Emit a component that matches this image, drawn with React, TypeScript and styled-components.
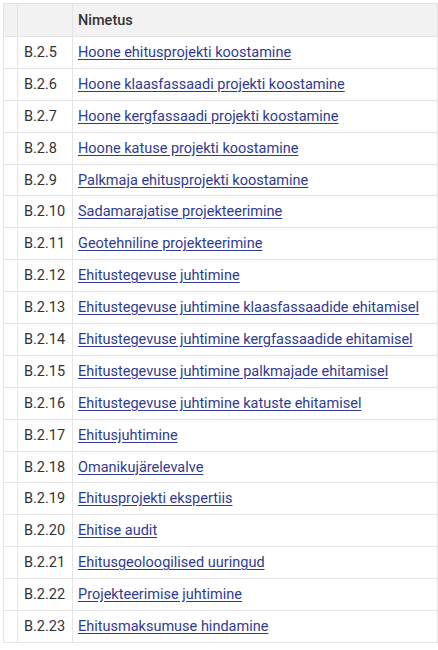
import React from 'react';
import styled, { createGlobalStyle } from 'styled-components';

const GlobalStyle = createGlobalStyle`
  body {
    margin: 0;
    background: #ffffff;
    font-family: Roboto, "Noto Sans", Arial, sans-serif;
  }
`;

const Wrapper = styled.div`
  padding: 3px 0 0 3px;
`;

const Table = styled.table`
  width: 435px;
  border-collapse: collapse;
  font-size: 14.5px;
  color: #333333;
  table-layout: fixed;
`;

const HeadCell = styled.th<{ $w?: number }>`
  background: #f2f2f2;
  border: 1px solid #e4e4e4;
  height: 33px;
  padding: 0 5px;
  text-align: left;
  font-weight: 500;
  color: #333333;
  width: ${(p) => (p.$w ? `${p.$w}px` : 'auto')};
  box-sizing: border-box;
`;

const Cell = styled.td`
  border: 1px solid #e4e4e4;
  height: 30.9px;
  padding: 0 5px;
  white-space: nowrap;
  line-height: 17px;
`;

const CodeCell = styled(Cell)`
  padding-left: 6px;
`;

const Link = styled.a`
  color: #2f3b93;
  text-decoration: underline;
  text-underline-offset: 1.5px;
`;

const rows: [string, string][] = [
  ['B.2.5', 'Hoone ehitusprojekti koostamine'],
  ['B.2.6', 'Hoone klaasfassaadi projekti koostamine'],
  ['B.2.7', 'Hoone kergfassaadi projekti koostamine'],
  ['B.2.8', 'Hoone katuse projekti koostamine'],
  ['B.2.9', 'Palkmaja ehitusprojekti koostamine'],
  ['B.2.10', 'Sadamarajatise projekteerimine'],
  ['B.2.11', 'Geotehniline projekteerimine'],
  ['B.2.12', 'Ehitustegevuse juhtimine'],
  ['B.2.13', 'Ehitustegevuse juhtimine klaasfassaadide ehitamisel'],
  ['B.2.14', 'Ehitustegevuse juhtimine kergfassaadide ehitamisel'],
  ['B.2.15', 'Ehitustegevuse juhtimine palkmajade ehitamisel'],
  ['B.2.16', 'Ehitustegevuse juhtimine katuste ehitamisel'],
  ['B.2.17', 'Ehitusjuhtimine'],
  ['B.2.18', 'Omanikujärelevalve'],
  ['B.2.19', 'Ehitusprojekti ekspertiis'],
  ['B.2.20', 'Ehitise audit'],
  ['B.2.21', 'Ehitusgeoloogilised uuringud'],
  ['B.2.22', 'Projekteerimise juhtimine'],
  ['B.2.23', 'Ehitusmaksumuse hindamine'],
];

const App: React.FC = () => {
  return (
    <Wrapper>
      <GlobalStyle />
      <Table>
        <thead>
          <tr>
            <HeadCell $w={14} />
            <HeadCell $w={55} />
            <HeadCell>Nimetus</HeadCell>
          </tr>
        </thead>
        <tbody>
          {rows.map(([code, name]) => (
            <tr key={code}>
              <Cell />
              <CodeCell>{code}</CodeCell>
              <Cell>
                <Link href="#">{name}</Link>
              </Cell>
            </tr>
          ))}
        </tbody>
      </Table>
    </Wrapper>
  );
};

export default App;
